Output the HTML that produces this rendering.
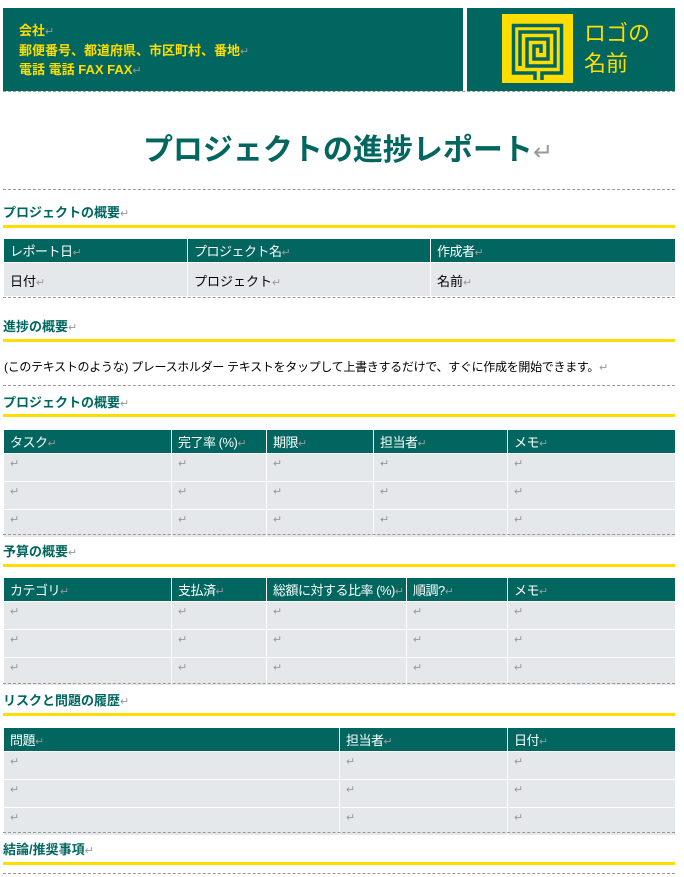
<!DOCTYPE html>
<html><head><meta charset="utf-8"><style>
*{margin:0;padding:0;box-sizing:border-box}
body{width:684px;height:877px;background:#fff;position:relative;overflow:hidden;font-family:"Liberation Sans","Noto Sans CJK JP",sans-serif;font-size:13px;color:#000}
.a{position:absolute}
.r{color:#999;font-size:11px;font-weight:normal}
.h{position:absolute;left:3px;font-weight:bold;color:#00665f;font-size:13px}
.y{position:absolute;left:3px;width:672px;height:3px;background:#ffdd00}
.d{position:absolute;left:3px;width:672px;border-top:1px dashed #999}
table{position:absolute;left:3px;width:672px;border-collapse:collapse;table-layout:fixed}
td{border:1px solid #fff;vertical-align:top;padding:3px 6px;font-size:13px;background:#e5e8eb;white-space:nowrap;overflow:hidden}
tr.t td{background:#00665f;color:#fff;padding:2px 6px;height:22px;letter-spacing:-0.5px}
tr.b td{height:28px}
</style></head><body>
<div class="a" style="left:3px;top:8px;width:672px;height:83px;background:#00665f"></div>
<div class="a" style="left:463px;top:8px;width:4px;height:83px;background:#fff"></div>
<div class="a" style="left:19px;top:22px;color:#ffdd00;font-weight:bold;font-size:13px;line-height:18.5px">会社<span class="r">↵</span><br>郵便番号、都道府県、市区町村、番地<span class="r">↵</span><br>電話 電話 FAX FAX<span class="r">↵</span></div>
<svg class="a" style="left:502px;top:14px" width="71" height="69" viewBox="0 0 71 69">
<rect width="71" height="69" fill="#ffdd00"/>
<g fill="none" stroke="#00665f" stroke-width="3.5">
<path d="M33 66V59H11.5V11.5H59.5V59H40V66"/>
<path d="M18 52V18H53V52H25V25H46V45H32V32H39V39"/>
</g></svg>
<div class="a" style="left:584px;top:19px;color:#ffdd00;font-size:22px;line-height:30px">ロゴの<br>名前</div>
<div class="d" style="top:91px"></div>
<div class="a" style="left:0;top:125px;width:684px;text-align:center;font-size:30px;font-weight:bold;color:#00665f;padding-left:12px;letter-spacing:0">プロジェクトの進捗レポート<span style="color:#999;font-weight:normal;font-size:24px">↵</span></div>
<div class="d" style="top:189px"></div>
<div class="h" style="top:202px">プロジェクトの概要<span class="r">↵</span></div>
<div class="y" style="top:225px"></div>
<table style="top:238px">
<col style="width:184px"><col style="width:243px"><col style="width:245px">
<tr class="t"><td>レポート日<span class="r">↵</span></td><td>プロジェクト名<span class="r">↵</span></td><td>作成者<span class="r">↵</span></td></tr>
<tr><td style="height:34px;padding-top:8px">日付<span class="r">↵</span></td><td style="padding-top:8px">プロジェクト<span class="r">↵</span></td><td style="padding-top:8px">名前<span class="r">↵</span></td></tr>
</table>
<div class="d" style="top:297px"></div>
<div class="h" style="top:316px">進捗の概要<span class="r">↵</span></div>
<div class="y" style="top:339px"></div>
<div class="a" style="left:4px;top:358px;font-size:12px;letter-spacing:-0.3px">(このテキストのような) プレースホルダー テキストをタップして上書きするだけで、すぐに作成を開始できます。<span class="r">↵</span></div>
<div class="d" style="top:385px"></div>
<div class="h" style="top:392px">プロジェクトの概要<span class="r">↵</span></div>
<div class="y" style="top:414px"></div>
<table style="top:429px">
<col style="width:168px"><col style="width:95px"><col style="width:107px"><col style="width:134px"><col style="width:168px">
<tr class="t"><td>タスク<span class="r">↵</span></td><td>完了率 (%)<span class="r">↵</span></td><td>期限<span class="r">↵</span></td><td>担当者<span class="r">↵</span></td><td>メモ<span class="r">↵</span></td></tr>
<tr class="b"><td class="r">↵</td><td class="r">↵</td><td class="r">↵</td><td class="r">↵</td><td class="r">↵</td></tr>
<tr class="b"><td class="r">↵</td><td class="r">↵</td><td class="r">↵</td><td class="r">↵</td><td class="r">↵</td></tr>
<tr class="b"><td class="r">↵</td><td class="r">↵</td><td class="r">↵</td><td class="r">↵</td><td class="r">↵</td></tr>
</table>
<div class="d" style="top:534px"></div>
<div class="h" style="top:541px">予算の概要<span class="r">↵</span></div>
<div class="y" style="top:564px"></div>
<table style="top:577px">
<col style="width:168px"><col style="width:95px"><col style="width:140px"><col style="width:101px"><col style="width:168px">
<tr class="t"><td>カテゴリ<span class="r">↵</span></td><td>支払済<span class="r">↵</span></td><td>総額に対する比率 (%)<span class="r">↵</span></td><td>順調?<span class="r">↵</span></td><td>メモ<span class="r">↵</span></td></tr>
<tr class="b"><td class="r">↵</td><td class="r">↵</td><td class="r">↵</td><td class="r">↵</td><td class="r">↵</td></tr>
<tr class="b"><td class="r">↵</td><td class="r">↵</td><td class="r">↵</td><td class="r">↵</td><td class="r">↵</td></tr>
<tr class="b"><td class="r">↵</td><td class="r">↵</td><td class="r">↵</td><td class="r">↵</td><td class="r">↵</td></tr>
</table>
<div class="d" style="top:683px"></div>
<div class="h" style="top:690px">リスクと問題の履歴<span class="r">↵</span></div>
<div class="y" style="top:713px"></div>
<table style="top:727px">
<col style="width:336px"><col style="width:168px"><col style="width:168px">
<tr class="t"><td>問題<span class="r">↵</span></td><td>担当者<span class="r">↵</span></td><td>日付<span class="r">↵</span></td></tr>
<tr class="b"><td class="r">↵</td><td class="r">↵</td><td class="r">↵</td></tr>
<tr class="b"><td class="r">↵</td><td class="r">↵</td><td class="r">↵</td></tr>
<tr class="b"><td class="r">↵</td><td class="r">↵</td><td class="r">↵</td></tr>
</table>
<div class="d" style="top:832px"></div>
<div class="h" style="top:839px">結論/推奨事項<span class="r">↵</span></div>
<div class="y" style="top:862px"></div>
<div class="d" style="top:873px"></div>
</body></html>
